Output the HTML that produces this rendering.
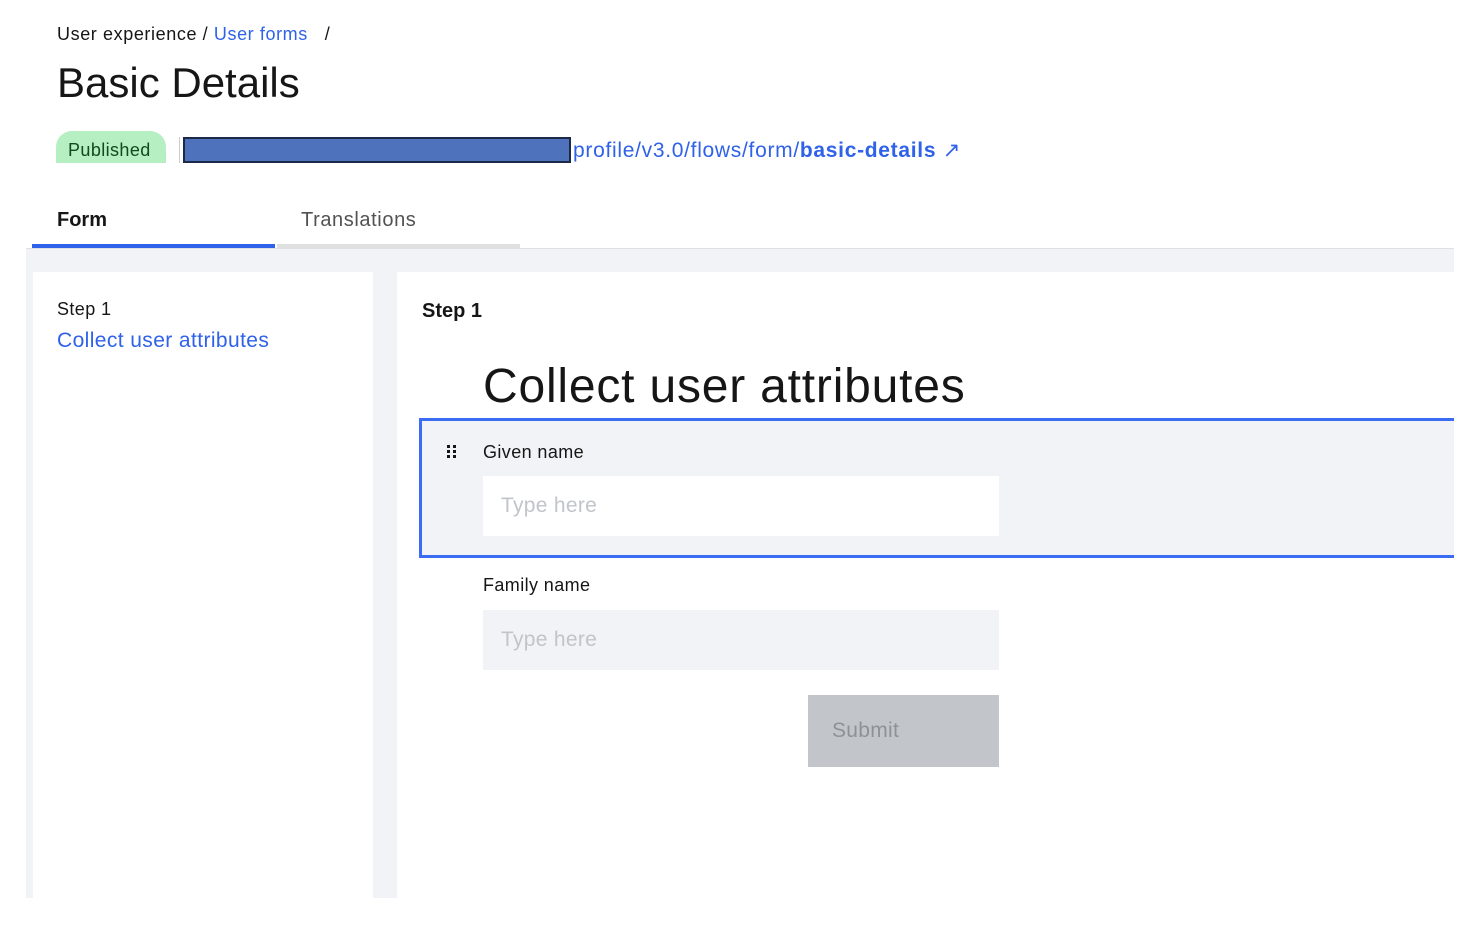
<!DOCTYPE html>
<html><head><style>
*{margin:0;padding:0;box-sizing:border-box}
body{width:1480px;height:932px;background:#fff;font-family:"Liberation Sans",sans-serif;color:#161616;position:relative;overflow:hidden}
.a{position:absolute}
.blue{color:#2f62e8}
</style></head><body>
<div class="a" style="left:57px;top:24px;font-size:18px;letter-spacing:0.6px">User experience / <span class="blue">User forms</span>&nbsp;&nbsp;&nbsp;/</div>
<div class="a" style="left:57px;top:59px;font-size:42px;">Basic Details</div>
<div class="a" style="left:56px;top:131px;width:110px;height:32px;background:#b6efc1;border-radius:16px 16px 0 0;font-size:18px;color:#0e4b1f;padding:9px 0 0 12px;letter-spacing:0.4px">Published</div>
<div class="a" style="left:179px;top:137px;width:1px;height:26px;background:#ccc"></div>
<div class="a" style="left:183px;top:137px;width:388px;height:26px;background:#4f72bd;border:2px solid #1c2a48"></div>
<div class="a blue" style="left:573px;top:138px;font-size:21px;letter-spacing:0.7px">profile/v3.0/flows/form/<b>basic-details</b> ↗</div>
<div class="a" style="left:57px;top:209px;font-size:20px;font-weight:bold">Form</div>
<div class="a" style="left:301px;top:209px;font-size:20px;color:#525252;letter-spacing:0.6px">Translations</div>
<div class="a" style="left:32px;top:244px;width:243px;height:4px;background:#2f62e8"></div>
<div class="a" style="left:277px;top:244px;width:243px;height:4px;background:#e0e0e0"></div>
<div class="a" style="left:26px;top:248px;width:1428px;height:650px;background:#f2f3f6;border-top:1px solid #e0e0e0"></div>
<div class="a" style="left:33px;top:272px;width:340px;height:626px;background:#fff"></div>
<div class="a" style="left:397px;top:272px;width:1057px;height:626px;background:#fff;overflow:hidden">
<div class="a" style="left:22px;top:146px;width:1060px;height:140px;background:#f2f3f6;border:3px solid #3b6cf4"></div>
</div>
<div class="a" style="left:57px;top:299px;font-size:18px;letter-spacing:0.4px">Step 1</div>
<div class="a blue" style="left:57px;top:329px;font-size:21px;letter-spacing:0.4px">Collect user attributes</div>
<div class="a" style="left:422px;top:300px;font-size:20px;font-weight:bold">Step 1</div>
<div class="a" style="left:483px;top:359px;font-size:48px;letter-spacing:0.8px">Collect user attributes</div>
<div class="a" style="left:447px;top:445px;width:11px;height:14px">
<svg width="11" height="14"><g fill="#161616"><rect x="0" y="0" width="3" height="3"/><rect x="6" y="0" width="3" height="3"/><rect x="0" y="5" width="3" height="3"/><rect x="6" y="5" width="3" height="3"/><rect x="0" y="10" width="3" height="3"/><rect x="6" y="10" width="3" height="3"/></g></svg></div>
<div class="a" style="left:483px;top:442px;font-size:18px;letter-spacing:0.4px">Given name</div>
<div class="a" style="left:483px;top:476px;width:516px;height:60px;background:#fff;font-size:21px;color:#c1c4c9;padding:18px 18px;letter-spacing:0.3px">Type here</div>
<div class="a" style="left:483px;top:575px;font-size:18px;letter-spacing:0.4px">Family name</div>
<div class="a" style="left:483px;top:610px;width:516px;height:60px;background:#f2f3f6;font-size:21px;color:#c1c4c9;padding:18px 18px;letter-spacing:0.3px">Type here</div>
<div class="a" style="left:808px;top:695px;width:191px;height:72px;background:#c2c6ca;font-size:21px;color:#8d9297;padding:24px 24px;letter-spacing:0.3px">Submit</div>
</body></html>
